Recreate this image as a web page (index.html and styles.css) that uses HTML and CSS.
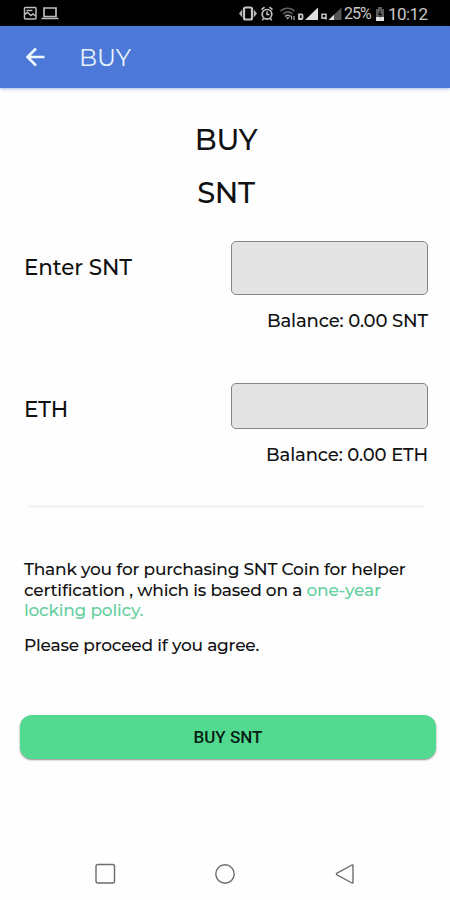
FILE: index.html
```html
<!DOCTYPE html>
<html lang="en">
<head>
    <meta charset="UTF-8">
    <meta name="viewport" content="width=device-width, initial-scale=1.0">
    <title>Buy SNT</title>
    <link rel="stylesheet" href="styles.css">
</head>
<body>
    <div class="status-bar">
        <svg class="status-left" width="36" height="16" viewBox="0 0 36 16" fill="none" stroke="#bdbdbd" stroke-width="1.5">
            <rect x="1.5" y="1.5" width="11.5" height="11.5" rx="1"/>
            <path d="M2 8l2.5-1.5L8 9.5l2-1.5 2.5 2M3.5 4.5h6"/>
            <path d="M21 2h12v8.5H21zM18.5 12.5h17" stroke-width="1.7"/>
        </svg>
        <svg class="status-icons" width="103" height="16" viewBox="0 0 103 16" fill="none" stroke="#c4c4c4" stroke-width="1.5">
            <!-- vibrate -->
            <rect x="5" y="1.5" width="8" height="12" rx="1.5" stroke-width="2.2"/>
            <path d="M3.2 3.5v8L0 7.5zM14.8 3.5v8L18 7.5z" fill="#b4b4b4" stroke="none"/>
            <!-- alarm -->
            <circle cx="28" cy="8.3" r="4.8" stroke-width="1.7"/>
            <path d="M22.5 3.7l3-2.5M33.5 3.7l-3-2.5M28 5.5v3h2.5M24.5 12.5l-1.2 1.8M31.5 12.5l1.2 1.8"/>
            <!-- wifi -->
            <path d="M41.5 5.2c4-4 10-4 14 0M44 8c3-2.700 6.500-2.700 9.500 0" stroke="#606060"/>
            <path d="M46 10.5c1.8-1.6 3.7-1.6 5.5 0" stroke="#aaa"/>
            <path d="M47 11.2h3.5l-1.75 2.5z" fill="#aaa" stroke="none"/>
            <path d="M52.5 9.5v4M55 10v4" stroke="#aaa" stroke-width="1.2"/>
            <!-- signal, both sims -->
            <path d="M60 8.3h2.5q1 0 1 1v2.700q0 1-1 1H60z" stroke="#ccc" stroke-width="1.8"/>
            <path d="M79 1.5V14H66z" fill="#dedede" stroke="none"/>
            <path d="M83 8.3h4v4h-4zM85 11l2.5 2.5" stroke="#bbb" stroke-width="1.6"/>
            <path d="M102.5 1.5V14H89.5z" fill="#555" stroke="none"/>
            <path d="M95 8.7V14h-5.5z" fill="#dedede" stroke="none"/>
        </svg>
        <span class="status-text battery-text">25%</span>
        <svg class="battery" width="10" height="15" viewBox="0 0 10 15">
            <path d="M3 0h4v2h2v12H1V2h2z" fill="#5c5c5c"/>
            <path d="M1 10h8v4H1z" fill="#e2e2e2"/>
            <path d="M5.5 3L3 8h2v3l2-4H5.5z" fill="#111"/>
        </svg>
        <span class="status-text clock">10:12</span>
    </div>

    <div class="header">
        <svg width="20" height="20" viewBox="0 0 20 20" fill="none" stroke="#eef6ff" stroke-width="2.6">
            <path d="M19.5 10H2.5M11 1.5L2.5 10l8.5 8.5"/>
        </svg>
        <span class="header-title">BUY</span>
    </div>

    <div class="content">
        <h1>BUY<br>SNT</h1>

        <form class="buy-form">
            <div class="field">
                <label for="snt">Enter SNT</label>
                <input type="text" id="snt" class="snt-input" name="snt">
            </div>
            <p class="balance snt-balance">Balance: 0.00 SNT</p>

            <div class="field">
                <label for="eth" class="eth-label">ETH</label>
                <input type="text" id="eth" class="eth-input" name="eth">
            </div>
            <p class="balance eth-balance">Balance: 0.00 ETH</p>

            <hr>

            <p class="note">Thank you for purchasing SNT Coin for helper<br>
            certification , which is based on a <a class="policy">one-year</a><br>
            <a class="policy">locking policy.</a></p>
            <p class="note note-agree">Please proceed if you agree.</p>

            <button type="submit">BUY SNT</button>
        </form>
    </div>

    <div class="nav-bar">
        <svg width="22" height="22" viewBox="0 0 22 22"><rect x="2" y="1.5" width="18.5" height="18.5" rx="2"/></svg>
        <svg width="22" height="22" viewBox="0 0 22 22"><circle cx="11" cy="11" r="9.2"/></svg>
        <svg width="22" height="22" viewBox="0 0 22 22"><path d="M19 2.5v17q0 1-1 .5L3 11.800q-1.300-.8 0-1.600L18 2q1-.5 1 .5z"/></svg>
    </div>
</body>
</html>
```
FILE: styles.css
```css
* {
    box-sizing: border-box;
}
body {
    margin: 0;
    height: 900px;
    overflow: hidden;
    display: flex;
    flex-direction: column;
    background-color: #fefefe;
    color: #111;
    font-family: Montserrat, Inter, sans-serif;
}
svg {
    display: block;
    flex: none;
}
.status-bar {
    height: 26px;
    display: flex;
    align-items: center;
    padding: 2px 0 0 23px;
    background-color: #000;
}
.status-icons {
    margin-left: 180px;
}
.status-text {
    color: #c8c8c8;
    font-family: Roboto, sans-serif;
    font-size: 16px;
    line-height: 16px;
    white-space: nowrap;
}
.battery-text {
    width: 27px;
    margin-left: 2px;
    letter-spacing: -1px;
}
.battery {
    margin-left: 4px;
}
.clock {
    margin-left: 3px;
    font-size: 17px;
    letter-spacing: -0.6px;
}
.header {
    height: 62px;
    display: flex;
    align-items: center;
    padding-left: 25px;
    background-color: #4c79d7;
    box-shadow: 0 1px 3px rgba(76, 121, 215, 0.5);
}
.header-title {
    margin-left: 34px;
    color: #e6f2ff;
    font-size: 24px;
    font-weight: 400;
    letter-spacing: -0.1px;
}
.content {
    flex: 1;
    padding: 25px 22px 0 24px;
}
h1 {
    margin: 0 0 22px;
    font-size: 29px;
    font-weight: 500;
    line-height: 53px;
    letter-spacing: -0.3px;
    text-align: center;
}
.field {
    display: flex;
    justify-content: space-between;
    align-items: center;
}
label {
    font-size: 21.5px;
    font-weight: 500;
    letter-spacing: -0.1px;
    padding-bottom: 3px;
}
.eth-label {
    padding: 6px 0 0;
}
input {
    width: 197px;
    border: 1px solid #858585;
    border-radius: 5px;
    background-color: #e4e4e4;
}
.snt-input {
    height: 54px;
}
.eth-input {
    height: 46px;
}
.balance {
    margin: 0;
    font-size: 18px;
    font-weight: 500;
    line-height: 22px;
    letter-spacing: -0.14px;
    text-align: right;
}
.snt-balance {
    padding-top: 15px;
    margin-bottom: 51px;
}
.eth-balance {
    padding-top: 15px;
}
hr {
    height: 3px;
    margin: 39px 4px 51px;
    border: none;
    border-radius: 2px;
    background-color: #f4f4f4;
}
.note {
    margin: 0;
    font-size: 17px;
    font-weight: 500;
    line-height: 20.5px;
    letter-spacing: -0.22px;
    white-space: nowrap;
}
.note-agree {
    margin-top: 14px;
}
.policy {
    color: #65cfa0;
}
button {
    display: block;
    width: 416px;
    height: 44px;
    margin: 60px 0 0 -4px;
    padding: 0;
    border: none;
    border-radius: 12px;
    background-color: #52da91;
    box-shadow: 0 1px 2px rgba(0, 0, 0, 0.45);
    color: #082014;
    font-family: Roboto, sans-serif;
    font-size: 17px;
    font-weight: 500;
}
.nav-bar {
    height: 52px;
    display: flex;
    justify-content: space-between;
    align-items: center;
    padding: 0 94px;
}
.nav-bar svg {
    fill: none;
    stroke: #6c6c6c;
    stroke-width: 1.4;
}
```
